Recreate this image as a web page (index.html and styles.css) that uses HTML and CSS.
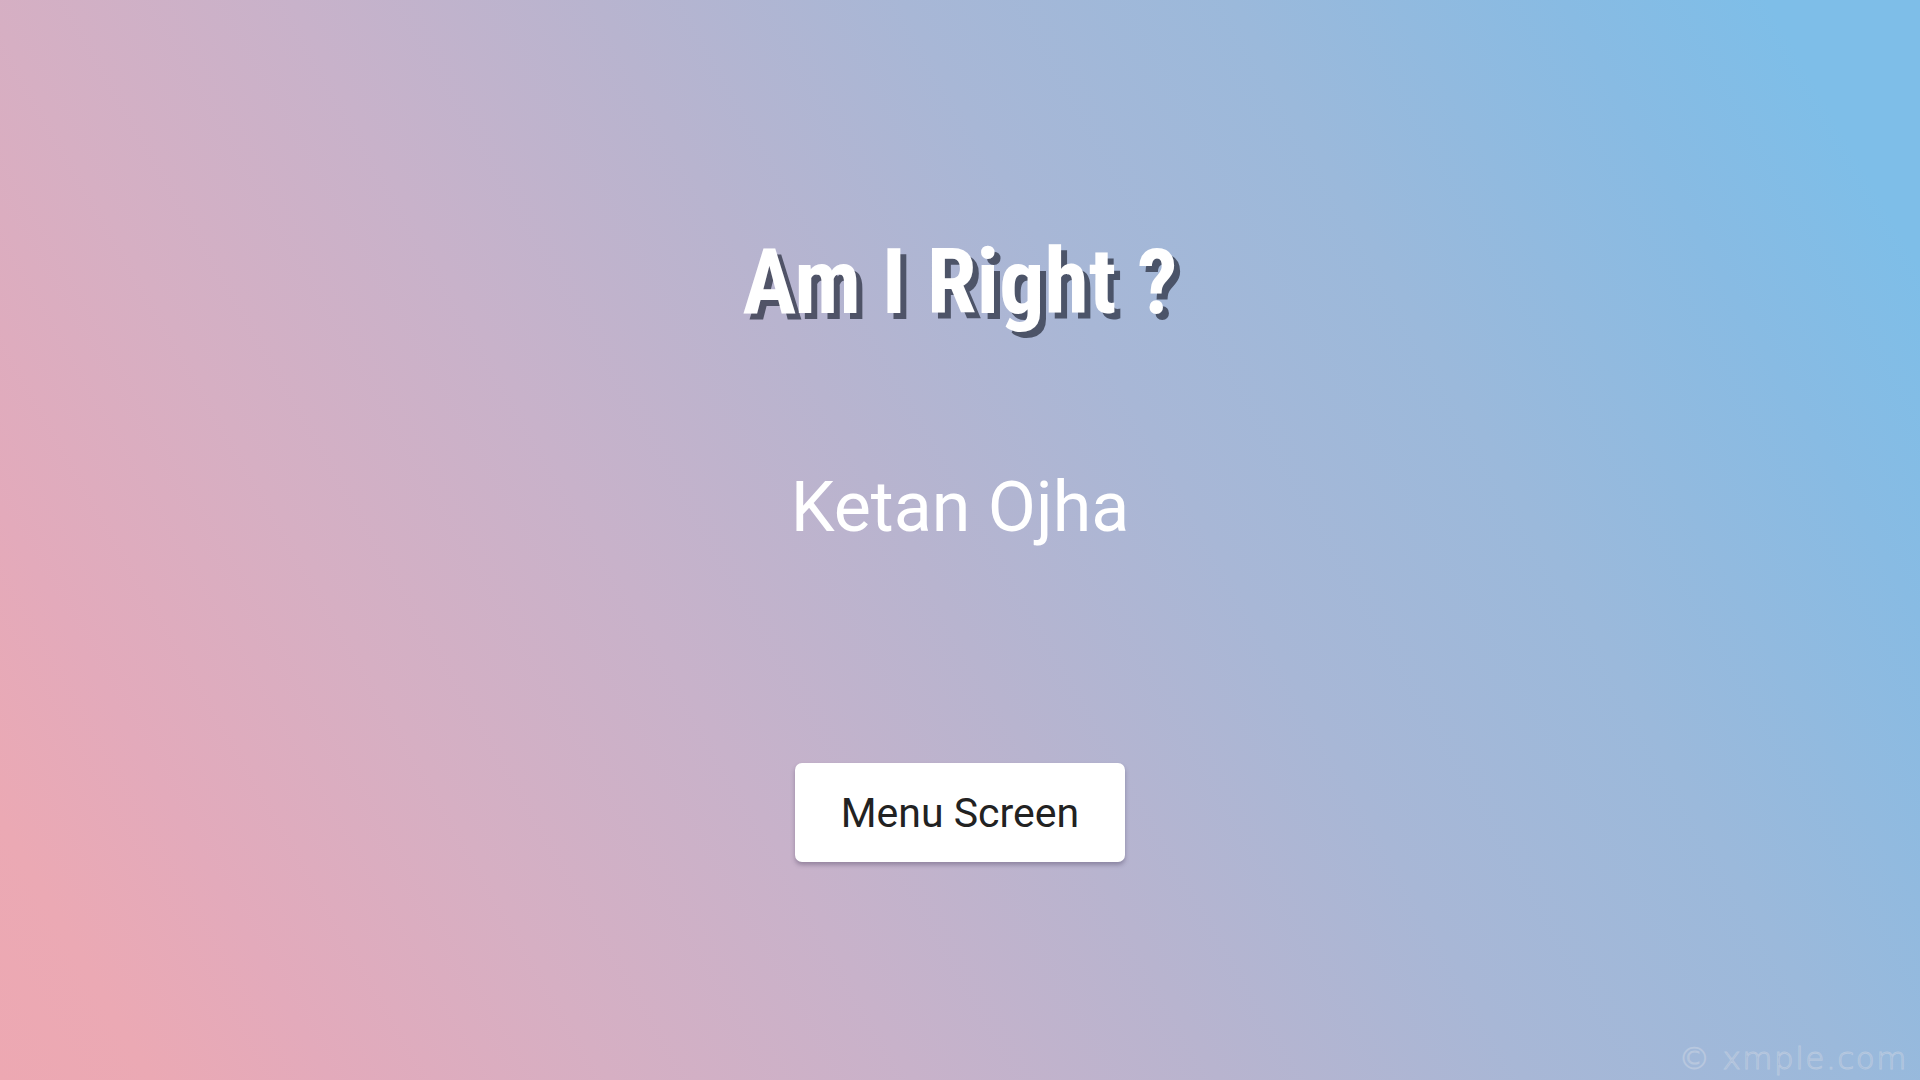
FILE: index.html
```html
<!DOCTYPE html>
<html lang="en">
<head>
<meta charset="utf-8">
<title>Am I Right ?</title>
<link rel="stylesheet" href="styles.css">
</head>
<body>
<main class="screen">
  <h1 class="title">Am I Right ?</h1>
  <p class="author">Ketan Ojha</p>
  <button class="menu-btn" type="button">Menu Screen</button>
  <div class="watermark">© xmple.com</div>
</main>
</body>
</html>
```
FILE: styles.css
```css
html, body {
  margin: 0;
  padding: 0;
  width: 100%;
  height: 100%;
  overflow: hidden;
}

body {
  font-family: Roboto, "Noto Sans", "Liberation Sans", sans-serif;
}

.screen {
  position: relative;
  box-sizing: border-box;
  width: 1920px;
  height: 1080px;
  padding-top: 238px;
  display: flex;
  flex-direction: column;
  align-items: center;
  background: linear-gradient(60deg,
    #eda8b2 0%,
    #eba9b4 6%,
    #e3aabb 13%,
    #d6afc3 24%,
    #c8b2ca 36%,
    #b8b4cf 48%,
    #a8b7d6 60%,
    #9bb9db 73%,
    #88bbe3 86%,
    #7ebee8 94%,
    #7ebee8 100%);
}

.title {
  margin: 0;
  font-family: "Roboto Condensed", Roboto, "Liberation Sans Narrow", sans-serif;
  font-stretch: condensed;
  font-weight: 700;
  font-size: 90px;
  line-height: 1;
  color: #ffffff;
  text-shadow: 6px 6px 0 rgba(40, 46, 62, 0.72);
}

.author {
  margin: 144px 0 0;
  font-size: 70px;
  font-weight: 400;
  line-height: 1;
  color: #ffffff;
}

.menu-btn {
  margin-top: 221px;
  width: 330px;
  height: 99px;
  border: none;
  border-radius: 7px;
  background: #ffffff;
  box-shadow: 0 3px 4px rgba(60, 50, 80, 0.35);
  font-family: Roboto, "Noto Sans", sans-serif;
  font-size: 41px;
  font-weight: 400;
  color: #222222;
  padding: 0;
  cursor: pointer;
}

.watermark {
  position: absolute;
  right: 12px;
  bottom: 4px;
  font-family: "DejaVu Sans", "Open Sans", sans-serif;
  font-weight: 200;
  font-size: 31px;
  letter-spacing: 1.5px;
  color: rgba(150, 165, 190, 0.2);
  -webkit-text-stroke: 1px rgba(210, 218, 232, 0.5);
}
```
